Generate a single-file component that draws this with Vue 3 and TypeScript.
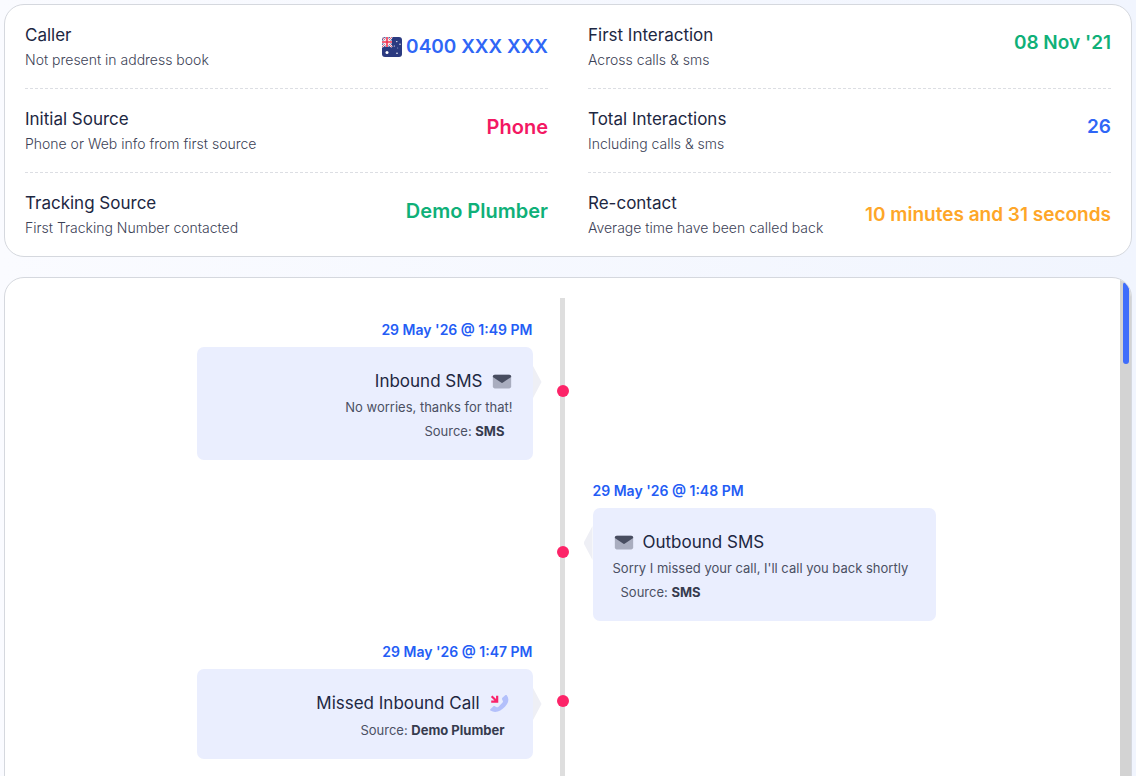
<script setup lang="ts">
interface Stat {
  title: string
  note: string
  value: string
  tone: 'blue' | 'pink' | 'green' | 'orange'
  low?: boolean
  figure?: boolean
  flag?: boolean
}

interface TimelineEvent {
  time: string
  title: string
  kind: 'sms' | 'missed'
  side: 'left' | 'right'
  message?: string
  source: string
}

const columns: Stat[][] = [
  [
    { title: 'Caller', note: 'Not present in address book', value: '0400 XXX XXX', tone: 'blue', low: true, figure: true, flag: true },
    { title: 'Initial Source', note: 'Phone or Web info from first source', value: 'Phone', tone: 'pink' },
    { title: 'Tracking Source', note: 'First Tracking Number contacted', value: 'Demo Plumber', tone: 'green' },
  ],
  [
    { title: 'First Interaction', note: 'Across calls & sms', value: "08 Nov '21", tone: 'green', figure: true },
    { title: 'Total Interactions', note: 'Including calls & sms', value: '26', tone: 'blue', figure: true },
    { title: 'Re-contact', note: 'Average time have been called back', value: '10 minutes and 31 seconds', tone: 'orange', low: true, figure: true },
  ],
]

const events: TimelineEvent[] = [
  { time: "29 May '26 @ 1:49 PM", title: 'Inbound SMS', kind: 'sms', side: 'left', message: 'No worries, thanks for that!', source: 'SMS' },
  { time: "29 May '26 @ 1:48 PM", title: 'Outbound SMS', kind: 'sms', side: 'right', message: "Sorry I missed your call, I'll call you back shortly", source: 'SMS' },
  { time: "29 May '26 @ 1:47 PM", title: 'Missed Inbound Call', kind: 'missed', side: 'left', source: 'Demo Plumber' },
]
</script>

<template>
  <main class="page">
    <section class="panel summary">
      <div v-for="(column, c) in columns" :key="c" class="column">
        <div v-for="stat in column" :key="stat.title" class="stat">
          <div class="label">
            <h2 class="title">{{ stat.title }}</h2>
            <p class="note">{{ stat.note }}</p>
          </div>
          <div class="value" :class="[stat.tone, { low: stat.low, figure: stat.figure }]">
            <svg v-if="stat.flag" class="flag" viewBox="0 0 20 20" role="img" aria-label="Australia">
              <rect width="20" height="20" rx="3" fill="#2b3a80" />
              <path d="M3 0h7v10H0V3a3 3 0 0 1 3-3z" fill="#4a5796" />
              <path d="M1 1l9 9M10 0L0 10" stroke="#fff" stroke-width="2" />
              <path d="M1 1l9 9M10 0L0 10" stroke="#e8405a" stroke-width="0.8" />
              <path d="M5 0v10M0 5h10" stroke="#fff" stroke-width="3" />
              <path d="M5 0v10M0 5h10" stroke="#f0304e" stroke-width="1.6" />
              <g fill="#fff">
                <circle cx="5" cy="15.5" r="1.5" />
                <circle cx="14.8" cy="4.6" r="0.7" />
                <circle cx="12.3" cy="9" r="0.6" />
                <circle cx="18" cy="7.3" r="0.7" />
                <circle cx="15.8" cy="11" r="0.4" />
                <circle cx="15" cy="16.2" r="0.8" />
              </g>
            </svg>
            <span>{{ stat.value }}</span>
          </div>
        </div>
      </div>
    </section>

    <section class="panel history">
      <ol class="timeline">
        <li v-for="event in events" :key="event.time" class="event" :class="event.side">
          <div class="entry">
            <time class="time">{{ event.time }}</time>
            <article class="card">
              <h3 class="heading">
                <span>{{ event.title }}</span>
                <svg v-if="event.kind === 'sms'" class="icon" viewBox="0 0 24 24" aria-hidden="true">
                  <rect x="2" y="4" width="20" height="15" rx="2" fill="#a9adbf" />
                  <path d="M4 4h16a2 2 0 0 1 2 2v0.6l-9.4 6.200a1.200 1.200 0 0 1-1.200 0L2 6.600V6a2 2 0 0 1 2-2z" fill="#484d60" />
                </svg>
                <svg v-else class="icon call" viewBox="0 0 24 24" aria-hidden="true">
                  <path d="M20.500 2.500l1.300 2.400c1.100 3 .2 6.500-3.300 10.100-3.800 3.800-8.300 6.700-13.300 5.300L2.600 19c-.5-.4-.5-1-.1-1.400l3.200-3c.5-.5 1.200-.5 1.800-.2l1.900 1.100c.6.300 1.300.2 1.800-.3l4.700-4.800c.5-.5.600-1.200.3-1.800l-.8-1.600c-.3-.6-.2-1.300.3-1.800l3.400-2.900c.5-.4 1.100-.3 1.400.2z" fill="#b3c0fb" />
                  <path d="M4 3.500l5 5M3.500 9.500h6.500V3" fill="none" stroke="#f9236a" stroke-width="2.400" />
                </svg>
              </h3>
              <p v-if="event.message" class="message">{{ event.message }}</p>
              <p class="source">Source: <strong>{{ event.source }}</strong></p>
            </article>
          </div>
          <span class="dot"></span>
        </li>
      </ol>
      <div class="track"><div class="thumb"></div></div>
    </section>
  </main>
</template>

<style>
body {
  margin: 0;
  overflow: hidden;
}
</style>

<style scoped>
.page {
  box-sizing: border-box;
  height: 100vh;
  overflow: hidden;
  display: flex;
  flex-direction: column;
  gap: 20px;
  padding: 4px 4px 0;
  background: linear-gradient(90deg, #fafbff, #f1f5fe);
  font-family: Inter, "Open Sans", sans-serif;
  color: #1d2742;
}

h2,
h3,
p,
ol {
  margin: 0;
  padding: 0;
  font-weight: 400;
}

.panel {
  flex: none;
  display: flex;
  background: #fff;
  border: 1px solid #d5d8de;
  border-radius: 20px;
}

.summary {
  gap: 40px;
  padding: 0 20px;
}

.column {
  flex: 1;
}

.stat {
  display: flex;
  justify-content: space-between;
  align-items: flex-start;
  padding: 18px 0;
  border-bottom: 1px dashed #dcdee3;
}

.stat:last-child {
  border-bottom: 0;
}

.title {
  font-size: 17px;
  line-height: 24px;
}

.note {
  margin-top: 3px;
  font-size: 14px;
  line-height: 20px;
  font-weight: 300;
  color: #3c4256;
}

.value {
  display: flex;
  align-items: center;
  gap: 4px;
  font-size: 20px;
  line-height: 40px;
  font-weight: 600;
  white-space: nowrap;
}

.value.low {
  line-height: 47px;
}

.value.figure {
  font-size: 19px;
}

.blue {
  color: #2f66f6;
}

.pink {
  color: #f31863;
}

.green {
  color: #0fb078;
}

.orange {
  color: #fea628;
}

.flag {
  width: 20px;
  height: 20px;
}

.history {
  overflow: hidden;
}

.timeline {
  flex: 1;
  display: flex;
  flex-direction: column;
  gap: 22px;
  padding: 43px 0 60px;
  list-style: none;
  background: linear-gradient(#dedede, #dedede) center 20px / 5px 100% no-repeat;
}

.event {
  display: grid;
  grid-template-columns: 1fr 60px 1fr;
  align-items: center;
}

.entry {
  grid-row: 1;
  grid-column: 1;
  display: flex;
  flex-direction: column;
  align-items: flex-end;
  text-align: right;
}

.right .entry {
  grid-column: 3;
  align-items: flex-start;
  text-align: left;
}

.dot {
  grid-row: 1;
  grid-column: 2;
  justify-self: center;
  width: 12px;
  height: 12px;
  border-radius: 50%;
  background: #fc2468;
}

.time {
  margin-bottom: 8px;
  font-size: 14px;
  line-height: 18px;
  font-weight: 600;
  color: #245df5;
}

.card {
  position: relative;
  box-sizing: border-box;
  min-width: 336px;
  padding: 20px 20px 17px;
  border-radius: 7px;
  background: #eaeefe;
}

.right .card {
  min-width: 343px;
}

.card::after {
  content: "";
  position: absolute;
  top: 18px;
  left: 100%;
  width: 9px;
  height: 34px;
  background: #eeeff5;
  clip-path: polygon(0 0, 100% 50%, 0 100%);
}

.right .card::after {
  left: auto;
  right: 100%;
  clip-path: polygon(100% 0, 0 50%, 100% 100%);
}

.heading {
  display: flex;
  justify-content: flex-end;
  align-items: center;
  gap: 8px;
  font-size: 17px;
  line-height: 29px;
}

.right .heading {
  flex-direction: row-reverse;
}

.icon {
  width: 22px;
  height: 22px;
}

.icon.call {
  margin-right: 3px;
}

.message {
  font-size: 13px;
  line-height: 23px;
  color: #4a5063;
}

.source {
  padding: 0 8px;
  font-size: 13px;
  line-height: 24px;
  color: #4a5063;
}

.source strong {
  font-weight: 700;
  color: #363b4e;
}

.track {
  box-sizing: border-box;
  width: 11px;
  padding: 4px 2px 4px 3px;
  background: #d3d3d3;
}

.thumb {
  height: 82px;
  border-radius: 3px;
  background: #3f6dfb;
}
</style>
